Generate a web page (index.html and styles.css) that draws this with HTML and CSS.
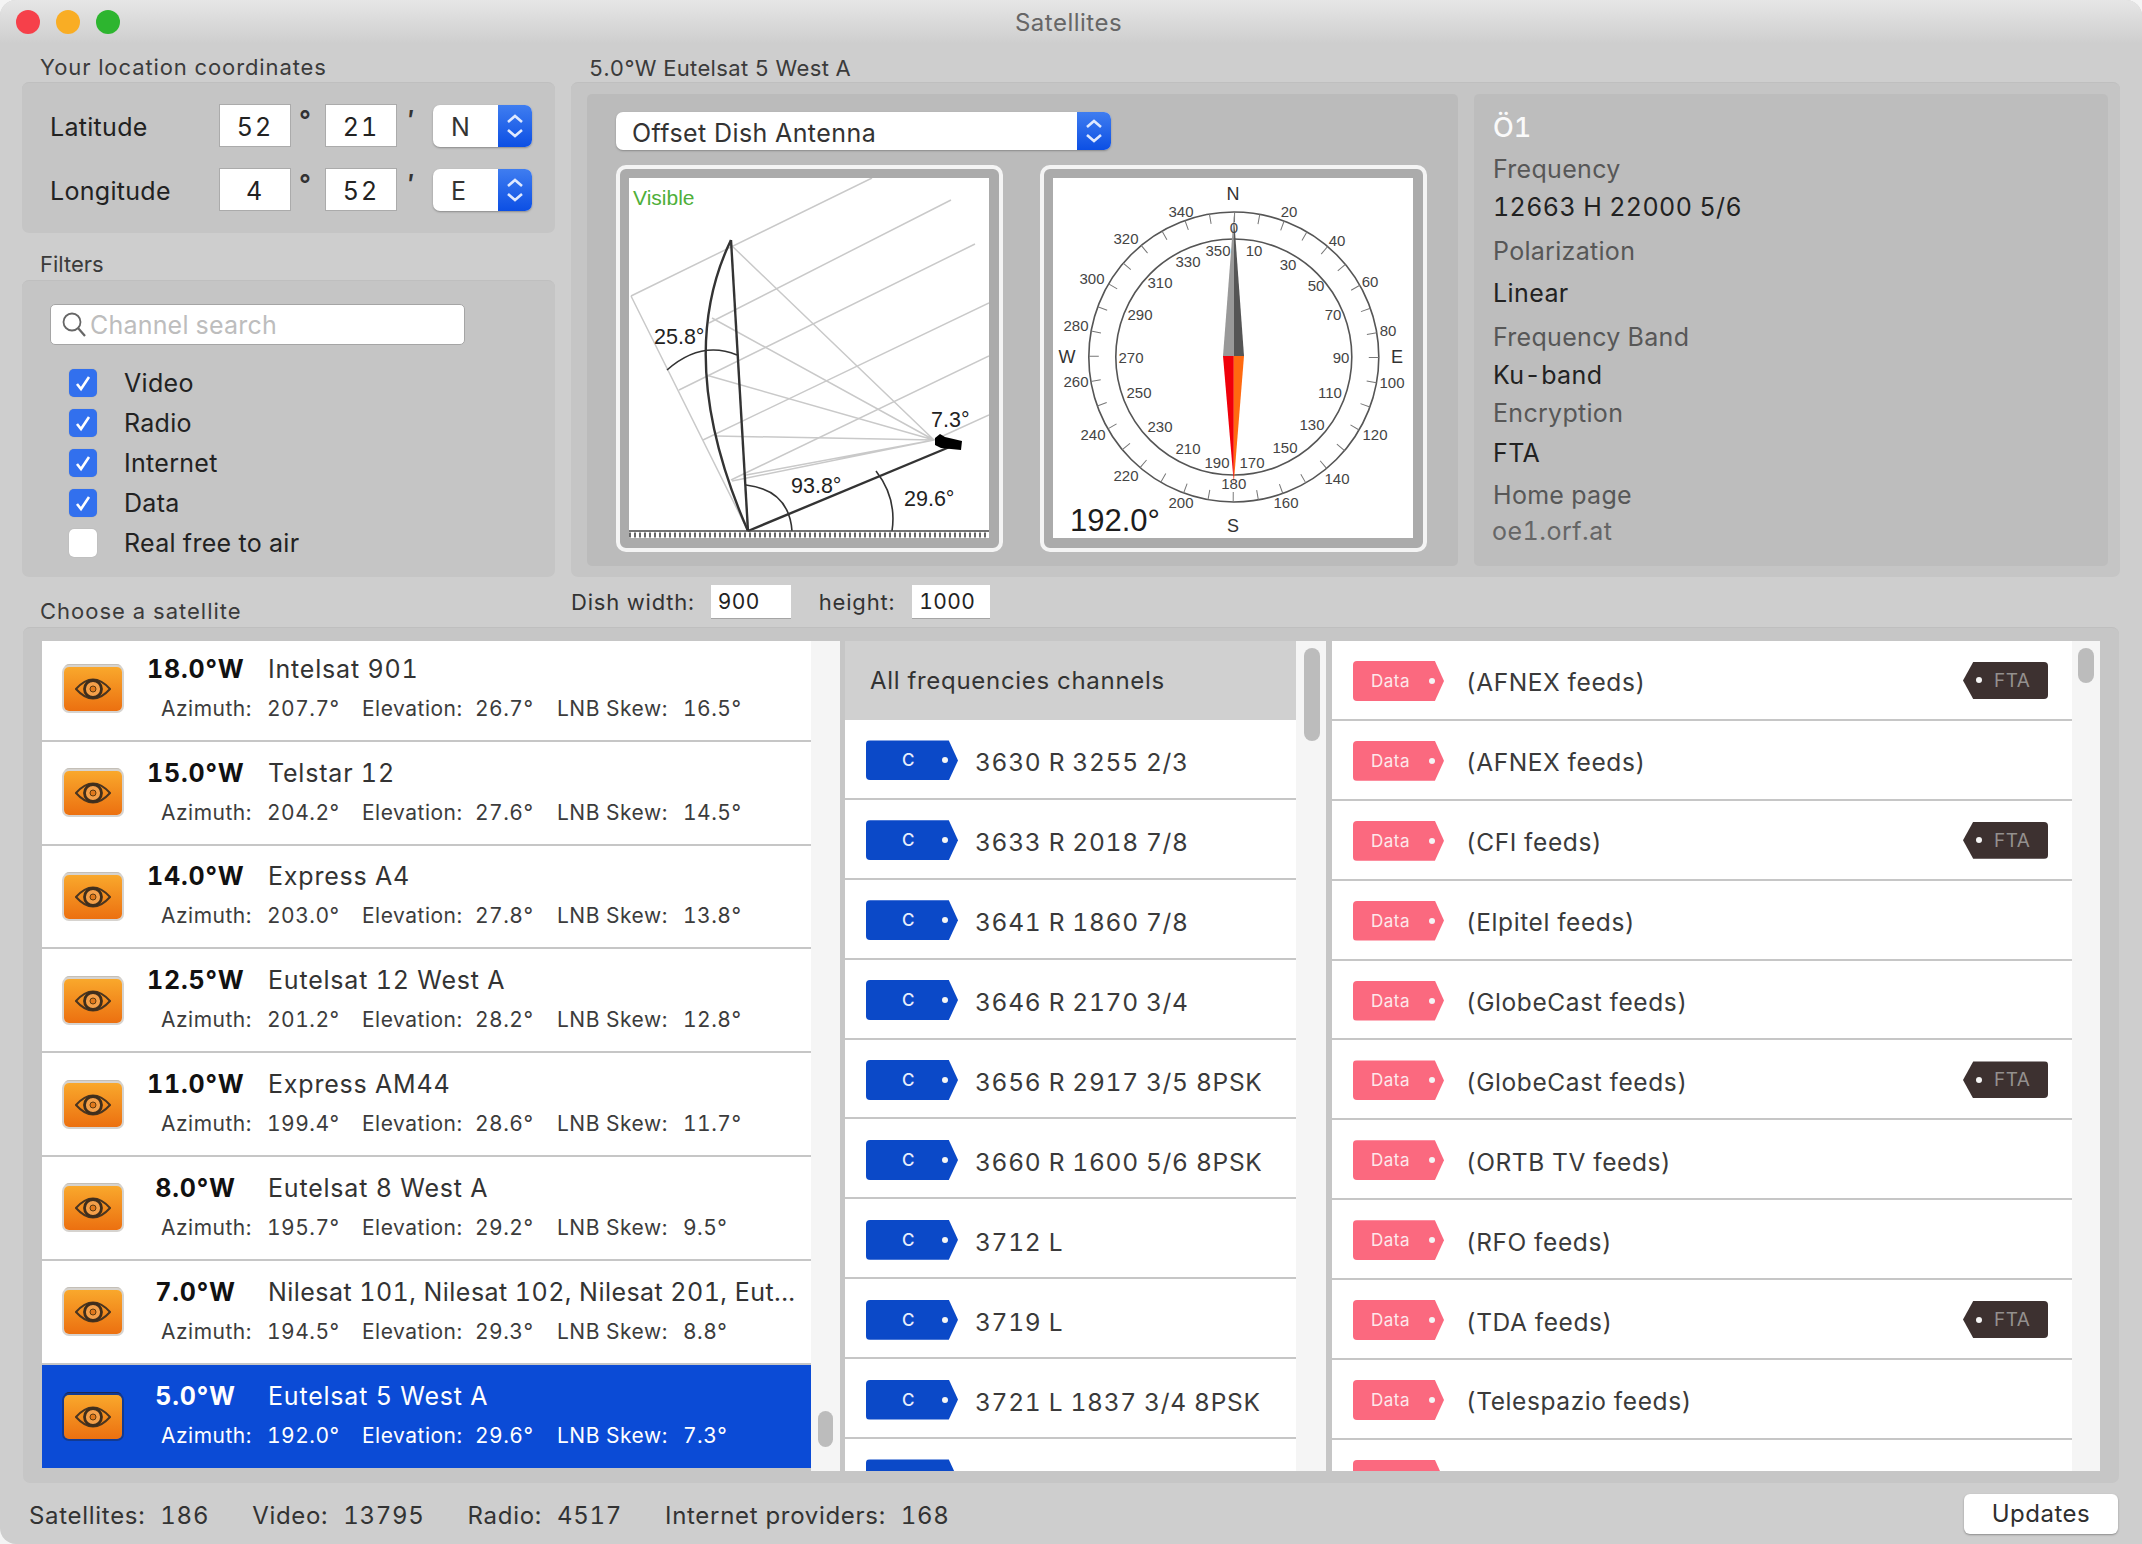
FILE: index.html
```html
<!DOCTYPE html>
<html lang="en">
<head>
<meta charset="utf-8">
<title>Satellites</title>
<link rel="stylesheet" href="styles.css">
</head>
<body>
<svg class="defs" width="0" height="0">
  <symbol id="eye" viewBox="0 0 36 26">
    <path d="M1 13Q18 -6 35 13Q18 32 1 13Z" fill="none" stroke="#4a3520" stroke-width="2"/>
    <circle cx="18" cy="13" r="8.5" fill="#f4a04a" stroke="#3f2e1c" stroke-width="2.8"/>
    <circle cx="18" cy="13" r="3" fill="#e0781c" stroke="#5c3a10" stroke-width="1"/>
  </symbol>
  <symbol id="updown" viewBox="0 0 22 30">
    <path d="M4 11l7-6 7 6M4 19l7 6 7-6" fill="none" stroke="#dfe9ff" stroke-width="2.6"/>
  </symbol>
  <symbol id="tick" viewBox="0 0 28 28">
    <path d="M8 15l4 5 8-12" fill="none" stroke="#fff" stroke-width="2.6"/>
  </symbol>
</svg>
<div class="window">
  <header class="titlebar">
    <div class="lights"><span class="light red"></span><span class="light yellow"></span><span class="light green"></span></div>
    <div class="title">Satellites</div>
  </header>

  <div class="top">
    <div class="left-col">
      <div class="cap cap-loc">Your location coordinates</div>
      <section class="group loc">
        <div class="coord">
          <span class="coord-label">Latitude</span>
          <span class="field">52</span><span class="unit">°</span>
          <span class="field">21</span><span class="unit">′</span>
          <div class="select small"><span class="select-text">N</span><span class="stepper"><svg width="22" height="30"><use href="#updown"/></svg></span></div>
        </div>
        <div class="coord">
          <span class="coord-label">Longitude</span>
          <span class="field">4</span><span class="unit">°</span>
          <span class="field">52</span><span class="unit">′</span>
          <div class="select small"><span class="select-text">E</span><span class="stepper"><svg width="22" height="30"><use href="#updown"/></svg></span></div>
        </div>
      </section>
      <div class="cap cap-fil">Filters</div>
      <section class="group filters">
        <div class="search">
          <svg width="26" height="28" viewBox="0 0 26 28"><circle cx="11" cy="11" r="8.5" fill="none" stroke="#666" stroke-width="1.8"/><path d="M17 17l7 8" stroke="#666" stroke-width="2.2"/></svg>
          <span class="placeholder">Channel search</span>
        </div>
        <div class="check"><span class="box on"><svg width="28" height="28"><use href="#tick"/></svg></span><span>Video</span></div>
        <div class="check"><span class="box on"><svg width="28" height="28"><use href="#tick"/></svg></span><span>Radio</span></div>
        <div class="check"><span class="box on"><svg width="28" height="28"><use href="#tick"/></svg></span><span>Internet</span></div>
        <div class="check"><span class="box on"><svg width="28" height="28"><use href="#tick"/></svg></span><span>Data</span></div>
        <div class="check"><span class="box"></span><span>Real free to air</span></div>
      </section>
    </div>

    <div class="right-col">
      <div class="cap cap-sat">5.0°W Eutelsat 5 West A</div>
      <section class="group sat-detail">
        <div class="dish-panel">
          <div class="select wide"><span class="select-text">Offset Dish Antenna</span><span class="stepper"><svg width="22" height="30"><use href="#updown"/></svg></span></div>
          <div class="frames">
            <div class="frame">
              <svg class="plot" width="360" height="360" viewBox="0 0 360 360">
                <rect width="360" height="360" fill="#fff"/>
                <g stroke="#c9c9c9" stroke-width="1.5" fill="none">
                  <path d="M2 118L243 0M80 145L322 22M50 212L346 66M74 262L360 125M102 302L360 178M305 262L360 237M2 118L119 353"/>
                  <path d="M102 67L305 262M83 140L305 262M77 197L305 262M87 258L305 262M117 297L305 262M103 303L305 262"/>
                </g>
                <g fill="none" stroke="#333">
                  <path d="M102 62L119 353" stroke-width="2.4"/>
                  <path d="M102 62Q44 182 119 353" stroke-width="2.4"/>
                  <path d="M119 353L323 268" stroke-width="2.4"/>
                  <path d="M38 192Q72 162 108 177" stroke-width="1.6"/>
                  <path d="M117 307Q160 312 163 353" stroke-width="1.6"/>
                  <path d="M247 293Q268 320 263 353" stroke-width="1.6"/>
                </g>
                <path d="M306 260L311 256L316 259L333 263L332 272L312 270L306 267Z" fill="#000"/>
                <path d="M0 353H360" stroke="#444" stroke-width="1.4"/>
                <path d="M0 357H360" stroke="#666" stroke-width="5" stroke-dasharray="2 3"/>
                <text class="svg-visible" x="4" y="27">Visible</text>
                <text class="svg-angle" x="25" y="166">25.8°</text>
                <text class="svg-angle" x="162" y="315">93.8°</text>
                <text class="svg-angle" x="275" y="328">29.6°</text>
                <text class="svg-angle" x="302" y="249">7.3°</text>
              </svg>
            </div>
            <div class="frame">
              <svg class="plot" width="360" height="360" viewBox="0 0 360 360">
                <rect width="360" height="360" fill="#fff"/>
                <g fill="none" stroke="#555">
                  <circle cx="180.8" cy="179" r="145" stroke-width="1.6"/>
                  <circle cx="180.8" cy="179" r="118" stroke-width="1.6"/>
                  <circle cx="180.8" cy="179" r="140" stroke-width="10" stroke-dasharray="1 23.435" stroke="#777"/>
                </g>
                <path d="M180.8 37L170 178H180.8Z" fill="#999"/>
                <path d="M180.8 37L191 178H180.8Z" fill="#555"/>
                <path d="M180.8 305L170 178H180.8Z" fill="#f0000a"/>
                <path d="M180.8 305L191 178H180.8Z" fill="#ff6a10"/>
                <g class="svg-num">
                  <text x="236" y="39">20</text><text x="284" y="68">40</text><text x="317" y="109">60</text><text x="335" y="158">80</text>
                  <text x="339" y="210">100</text><text x="322" y="262">120</text><text x="284" y="306">140</text><text x="233" y="330">160</text>
                  <text x="128" y="330">200</text><text x="73" y="303">220</text><text x="40" y="262">240</text><text x="23" y="209">260</text>
                  <text x="23" y="153">280</text><text x="39" y="106">300</text><text x="73" y="66">320</text><text x="128" y="39">340</text>
                  <text x="201" y="78">10</text><text x="235" y="92">30</text><text x="263" y="113">50</text><text x="280" y="142">70</text>
                  <text x="288" y="185">90</text><text x="277" y="220">110</text><text x="259" y="252">130</text><text x="232" y="275">150</text>
                  <text x="199" y="290">170</text><text x="164" y="290">190</text><text x="135" y="276">210</text><text x="107" y="254">230</text>
                  <text x="86" y="220">250</text><text x="78" y="185">270</text><text x="87" y="142">290</text><text x="107" y="110">310</text>
                  <text x="135" y="89">330</text><text x="165" y="78">350</text>
                  <text x="180.8" y="55">0</text><text x="180.8" y="311">180</text>
                </g>
                <g class="svg-card">
                  <text x="180" y="22">N</text><text x="344" y="185">E</text><text x="180" y="354">S</text><text x="14" y="185">W</text>
                </g>
                <text class="svg-az" x="17" y="353">192.0°</text>
              </svg>
            </div>
          </div>
        </div>
        <div class="info">
          <div class="info-title">Ö1</div>
          <div class="info-label">Frequency</div>
          <div class="info-value">12663 H 22000 5/6</div>
          <div class="info-label">Polarization</div>
          <div class="info-value">Linear</div>
          <div class="info-label">Frequency Band</div>
          <div class="info-value">Ku-band</div>
          <div class="info-label">Encryption</div>
          <div class="info-value">FTA</div>
          <div class="info-label">Home page</div>
          <div class="info-link">oe1.orf.at</div>
        </div>
      </section>
    </div>
  </div>

  <div class="mid">
    <div class="cap cap-choose">Choose a satellite</div>
    <div class="dish-size">
      <span>Dish width:</span><span class="mini w">900</span>
      <span class="h-label">height:</span><span class="mini h">1000</span>
    </div>
  </div>

  <section class="group lists">
    <div class="list sats">
      <div class="sat-rows">
        <div class="sat"><div class="eye"><svg width="36" height="26"><use href="#eye"/></svg></div><div class="sat-text"><div class="sat-main"><b class="lon">18.0°W</b><span>Intelsat 901</span></div><div class="sat-sub"><span>Azimuth:</span><span>207.7°</span><span>Elevation:</span><span>26.7°</span><span>LNB Skew:</span><span>16.5°</span></div></div></div>
        <div class="sat"><div class="eye"><svg width="36" height="26"><use href="#eye"/></svg></div><div class="sat-text"><div class="sat-main"><b class="lon">15.0°W</b><span>Telstar 12</span></div><div class="sat-sub"><span>Azimuth:</span><span>204.2°</span><span>Elevation:</span><span>27.6°</span><span>LNB Skew:</span><span>14.5°</span></div></div></div>
        <div class="sat"><div class="eye"><svg width="36" height="26"><use href="#eye"/></svg></div><div class="sat-text"><div class="sat-main"><b class="lon">14.0°W</b><span>Express A4</span></div><div class="sat-sub"><span>Azimuth:</span><span>203.0°</span><span>Elevation:</span><span>27.8°</span><span>LNB Skew:</span><span>13.8°</span></div></div></div>
        <div class="sat"><div class="eye"><svg width="36" height="26"><use href="#eye"/></svg></div><div class="sat-text"><div class="sat-main"><b class="lon">12.5°W</b><span>Eutelsat 12 West A</span></div><div class="sat-sub"><span>Azimuth:</span><span>201.2°</span><span>Elevation:</span><span>28.2°</span><span>LNB Skew:</span><span>12.8°</span></div></div></div>
        <div class="sat"><div class="eye"><svg width="36" height="26"><use href="#eye"/></svg></div><div class="sat-text"><div class="sat-main"><b class="lon">11.0°W</b><span>Express AM44</span></div><div class="sat-sub"><span>Azimuth:</span><span>199.4°</span><span>Elevation:</span><span>28.6°</span><span>LNB Skew:</span><span>11.7°</span></div></div></div>
        <div class="sat"><div class="eye"><svg width="36" height="26"><use href="#eye"/></svg></div><div class="sat-text"><div class="sat-main"><b class="lon">8.0°W</b><span>Eutelsat 8 West A</span></div><div class="sat-sub"><span>Azimuth:</span><span>195.7°</span><span>Elevation:</span><span>29.2°</span><span>LNB Skew:</span><span>9.5°</span></div></div></div>
        <div class="sat"><div class="eye"><svg width="36" height="26"><use href="#eye"/></svg></div><div class="sat-text"><div class="sat-main"><b class="lon">7.0°W</b><span class="long-name">Nilesat 101, Nilesat 102, Nilesat 201, Eut...</span></div><div class="sat-sub"><span>Azimuth:</span><span>194.5°</span><span>Elevation:</span><span>29.3°</span><span>LNB Skew:</span><span>8.8°</span></div></div></div>
        <div class="sat selected"><div class="eye"><svg width="36" height="26"><use href="#eye"/></svg></div><div class="sat-text"><div class="sat-main"><b class="lon">5.0°W</b><span>Eutelsat 5 West A</span></div><div class="sat-sub"><span>Azimuth:</span><span>192.0°</span><span>Elevation:</span><span>29.6°</span><span>LNB Skew:</span><span>7.3°</span></div></div></div>
      </div>
      <div class="track track-sat"><div class="thumb"></div></div>
    </div>

    <div class="list freqs">
      <div class="rows">
        <div class="freq-head">All frequencies channels</div>
        <div class="row"><span class="tag tag-c"><span>C</span><i></i></span><span>3630 R 3255 2/3</span></div>
        <div class="row"><span class="tag tag-c"><span>C</span><i></i></span><span>3633 R 2018 7/8</span></div>
        <div class="row"><span class="tag tag-c"><span>C</span><i></i></span><span>3641 R 1860 7/8</span></div>
        <div class="row"><span class="tag tag-c"><span>C</span><i></i></span><span>3646 R 2170 3/4</span></div>
        <div class="row"><span class="tag tag-c"><span>C</span><i></i></span><span>3656 R 2917 3/5 8PSK</span></div>
        <div class="row"><span class="tag tag-c"><span>C</span><i></i></span><span>3660 R 1600 5/6 8PSK</span></div>
        <div class="row"><span class="tag tag-c"><span>C</span><i></i></span><span>3712 L</span></div>
        <div class="row"><span class="tag tag-c"><span>C</span><i></i></span><span>3719 L</span></div>
        <div class="row"><span class="tag tag-c"><span>C</span><i></i></span><span>3721 L 1837 3/4 8PSK</span></div>
        <div class="row"><span class="tag tag-c"></span></div>
      </div>
      <div class="track track-freq"><div class="thumb"></div></div>
    </div>

    <div class="list chans">
      <div class="rows">
        <div class="row"><span class="tag tag-d"><span>Data</span><i></i></span><span class="chan">(AFNEX feeds)</span><span class="tag tag-f"><i></i><span>FTA</span></span></div>
        <div class="row"><span class="tag tag-d"><span>Data</span><i></i></span><span class="chan">(AFNEX feeds)</span></div>
        <div class="row"><span class="tag tag-d"><span>Data</span><i></i></span><span class="chan">(CFI feeds)</span><span class="tag tag-f"><i></i><span>FTA</span></span></div>
        <div class="row"><span class="tag tag-d"><span>Data</span><i></i></span><span class="chan">(Elpitel feeds)</span></div>
        <div class="row"><span class="tag tag-d"><span>Data</span><i></i></span><span class="chan">(GlobeCast feeds)</span></div>
        <div class="row"><span class="tag tag-d"><span>Data</span><i></i></span><span class="chan">(GlobeCast feeds)</span><span class="tag tag-f"><i></i><span>FTA</span></span></div>
        <div class="row"><span class="tag tag-d"><span>Data</span><i></i></span><span class="chan">(ORTB TV feeds)</span></div>
        <div class="row"><span class="tag tag-d"><span>Data</span><i></i></span><span class="chan">(RFO feeds)</span></div>
        <div class="row"><span class="tag tag-d"><span>Data</span><i></i></span><span class="chan">(TDA feeds)</span><span class="tag tag-f"><i></i><span>FTA</span></span></div>
        <div class="row"><span class="tag tag-d"><span>Data</span><i></i></span><span class="chan">(Telespazio feeds)</span></div>
        <div class="row"><span class="tag tag-d"></span></div>
      </div>
      <div class="track track-chan"><div class="thumb"></div></div>
    </div>
  </section>

  <footer class="status">
    <span class="stat"><span>Satellites:</span><span>186</span></span>
    <span class="stat"><span>Video:</span><span>13795</span></span>
    <span class="stat"><span>Radio:</span><span>4517</span></span>
    <span class="stat"><span>Internet providers:</span><span>168</span></span>
    <button class="updates">Updates</button>
  </footer>
</div>
</body>
</html>
```

FILE: styles.css
```css
* { box-sizing: border-box; }
html, body { margin: 0; padding: 0; }
body {
  width: 2142px;
  height: 1544px;
  background: #f4f4f4;
  font-family: Inter, "Liberation Sans", sans-serif;
  font-size: 24px;
  font-variant-numeric: tabular-nums;
  color: #2a2a2a;
  overflow: hidden;
}
.defs { position: absolute; }
.window {
  width: 2142px;
  height: 1544px;
  background: #cecece;
  border-radius: 16px 16px 0 16px;
  display: flex;
  flex-direction: column;
  overflow: hidden;
}

/* title bar */
.titlebar {
  height: 44px;
  flex: none;
  display: flex;
  align-items: center;
  justify-content: center;
  background: linear-gradient(#e6e6e6, #cecece);
  position: relative;
}
.lights {
  position: absolute;
  left: 16px;
  top: 10px;
  display: flex;
  gap: 16px;
}
.light { width: 24px; height: 24px; border-radius: 50%; }
.red { background: #f6404a; }
.yellow { background: #f9ad24; }
.green { background: #2db52f; }
.title { font-size: 24px; letter-spacing: .5px; color: #666; line-height: 44px; margin: 1px 5px 0 0; }

/* shared */
.cap { font-size: 22px; color: #3b3b3b; line-height: 28px; padding-left: 18px; }
.group {
  background: #c5c5c5;
  border-radius: 7px;
  border-top: 1px solid #bfbfbf;
}

/* top section */
.top { display: flex; gap: 16px; padding: 0 22px; flex: none; }
.left-col { width: 533px; flex: none; }
.right-col { flex: 1; }
.cap-loc { height: 38px; padding-top: 9px; letter-spacing: .9px; }
.cap-sat { height: 38px; padding-top: 10px; letter-spacing: .35px; }
.cap-fil { height: 47px; padding-top: 17px; }
.loc { height: 151px; padding: 21px 0 0 28px; }
.coord { display: flex; align-items: center; height: 43px; margin-bottom: 21px; }
.coord-label { width: 169px; font-size: 25px; letter-spacing: .3px; color: #222; padding-top: 2px; }
.field {
  width: 72px;
  height: 43px;
  background: #fff;
  border: 1px solid #ababab;
  text-align: center;
  line-height: 45px;
  font-size: 25px;
  letter-spacing: 2px;
  color: #222;
}
.unit { width: 34px; text-align: center; font-size: 26px; font-weight: 600; line-height: 26px; align-self: flex-start; color: #333; padding: 3px 6px 0 0; }
.select {
  display: flex;
  background: #fff;
  border-radius: 7px;
  box-shadow: 0 1px 2px #8a8a8a;
  overflow: hidden;
  font-size: 25px;
}
.select.small { width: 99px; height: 42px; margin-left: 2px; }
.select.wide { width: 495px; height: 38px; }
.select-text { flex: 1; line-height: 44px; padding-left: 18px; color: #333; }
.select.wide .select-text { line-height: 42px; padding-left: 16px; letter-spacing: .45px; }
.stepper {
  width: 34px;
  flex: none;
  background: linear-gradient(#3f7df0, #0c4fe4);
  display: flex;
  align-items: center;
  justify-content: center;
}

.filters { height: 297px; padding: 23px 0 0 28px; }
.search {
  width: 415px;
  height: 41px;
  background: #fff;
  border: 1px solid #a5a5a5;
  border-radius: 5px;
  display: flex;
  align-items: center;
  gap: 3px;
  padding-left: 10px;
}
.placeholder { color: #bdbdbd; font-size: 25px; letter-spacing: .2px; }
.check {
  display: flex;
  align-items: center;
  height: 40px;
  margin-left: 19px;
  font-size: 25px;
  letter-spacing: .3px;
  color: #222;
}
.search + .check { margin-top: 18px; }
.box {
  width: 28px;
  height: 28px;
  border-radius: 5px;
  background: #fff;
  margin-right: 27px;
  flex: none;
  box-shadow: 0 0 1px #999;
}
.box.on { background: #3270ee; }
.box svg { display: block; }

.sat-detail {
  height: 495px;
  display: flex;
  gap: 16px;
  padding: 11px 12px 0 16px;
}
.dish-panel {
  width: 871px;
  height: 472px;
  background: #bbb;
  border-radius: 5px;
  padding: 18px 0 0 29px;
}
.frames { display: flex; gap: 37px; margin-top: 15px; }
.frame {
  width: 387px;
  height: 387px;
  border: 4px solid #f4f4f4;
  border-radius: 10px;
  background: #ababab;
  padding: 9px;
}
.plot { display: block; }
.svg-visible { font: 21px "Liberation Sans", sans-serif; fill: #4eaf3a; }
.svg-angle { font: 21.5px "Liberation Sans", sans-serif; fill: #222; }
.svg-num text { font: 15px "Liberation Sans", sans-serif; fill: #444; text-anchor: middle; }
.svg-card text { font: 18px "Liberation Sans", sans-serif; fill: #333; text-anchor: middle; }
.svg-az { font: 31px "Liberation Sans", sans-serif; fill: #1c1c1c; }

.info {
  flex: 1;
  height: 472px;
  background: #bdbdbd;
  border-radius: 5px;
  padding: 19px 0 0 19px;
}
.info > div { line-height: 30px; }
.info-title { font-size: 27px; font-weight: 500; color: #fafafa; }
.info-label { font-size: 25px; letter-spacing: .3px; color: #575757; }
.info-value { font-size: 25px; letter-spacing: .4px; color: #222; }
.info-link { font-size: 25px; letter-spacing: .5px; color: #666; margin-left: -1px; }
.info > :nth-child(2) { margin-top: 11px; }
.info > :nth-child(3) { margin-top: 8px; }
.info > :nth-child(4) { margin-top: 14px; }
.info > :nth-child(5) { margin-top: 12px; }
.info > :nth-child(6) { margin-top: 14px; }
.info > :nth-child(7) { margin-top: 8px; }
.info > :nth-child(8) { margin-top: 8px; }
.info > :nth-child(9) { margin-top: 10px; }
.info > :nth-child(10) { margin-top: 12px; }
.info > :nth-child(11) { margin-top: 6px; }

/* between rows */
.mid { display: flex; height: 50px; padding: 0 22px; flex: none; }
.cap-choose { width: 549px; padding-top: 20px; flex: none; letter-spacing: 1px; }
.dish-size {
  display: flex;
  align-items: center;
  height: 34px;
  margin-top: 8px;
  font-size: 22px;
  letter-spacing: .8px;
  color: #333;
}
.mini {
  height: 34px;
  background: #fff;
  border-bottom: 1px solid #a5a5a5;
  line-height: 34px;
  font-size: 21px;
  padding-left: 7px;
  letter-spacing: .4px;
  color: #222;
}
.mini.w { width: 80px; margin-left: 16px; }
.mini.h { width: 78px; margin-left: 17px; }
.h-label { margin-left: 28px; }

/* lists */
.lists {
  height: 856px;
  margin: 0 23px 0 23px;
  padding: 13px 19px 13px 19px;
  display: flex;
  gap: 5px;
  flex: none;
  background: #c6c6c6;
}
.list { display: flex; height: 830px; overflow: hidden; flex: none; }
.sats { width: 798px; }
.freqs { width: 481px; }
.chans { width: 768px; margin-left: 1px; }
.track { background: #f5f5f5; flex: none; height: 830px; }
.thumb { background: #bcbcbc; border-radius: 9px; }
.track-sat { width: 29px; padding: 770px 0 0 7px; }
.track-sat .thumb { width: 15px; height: 36px; }
.track-freq { width: 30px; padding: 7px 0 0 8px; }
.track-freq .thumb { width: 16px; height: 93px; }
.track-chan { width: 28px; padding: 7px 0 0 6px; }
.track-chan .thumb { width: 16px; height: 35px; }

.sat-rows { width: 769px; flex: none; margin-top: -3px; }
.sat {
  height: 103.8px;
  background: #fff;
  border-bottom: 2px solid #c6c6c6;
  display: flex;
  align-items: center;
  padding-left: 22px;
}
.eye {
  width: 58px;
  height: 44px;
  flex: none;
  margin-top: 1px;
  background: linear-gradient(#f9a82c, #ec7010);
  border-radius: 5px;
  box-shadow: 0 0 0 2px #d6d3cf, 0 -3px 0 #c4bfb7;
  display: flex;
  align-items: center;
  justify-content: center;
}
.sat-text { margin-left: 25px; width: 650px; }
.sat-main { display: flex; line-height: 30px; font-size: 25px; letter-spacing: .8px; color: #333; white-space: nowrap; margin-top: -1px; }
.lon { width: 97px; text-align: center; margin-right: 24px; font-weight: 700; letter-spacing: .8px; color: #111; white-space: nowrap; }
.long-name { letter-spacing: .45px; }
.sat-sub {
  display: grid;
  grid-template-columns: 106px 95px 113px 82px 126px auto;
  margin-left: 14px;
  margin-top: 11px;
  line-height: 28px;
  font-size: 21px;
  letter-spacing: .5px;
  color: #3c3c3c;
  white-space: nowrap;
}
.sat.selected { background: #0b4bd6; border-bottom: 0; }
.sat.selected .sat-main, .sat.selected .lon, .sat.selected .sat-sub { color: #fff; }
.sat.selected .eye { box-shadow: 0 0 0 2px #123a92, 0 -3px 0 #1c2a55; }

.rows { flex: 1; min-width: 0; }
.freq-head {
  height: 79px;
  background: #d0d0d0;
  line-height: 80px;
  padding-left: 25px;
  font-size: 24px;
  letter-spacing: .7px;
  color: #333;
}
.row {
  height: 79.9px;
  background: #fff;
  border-bottom: 2px solid #c6c6c6;
  display: flex;
  align-items: center;
  padding: 5px 23px 0 21px;
  font-size: 24.5px;
  letter-spacing: .6px;
  color: #3a3a3a;
  white-space: nowrap;
}
.freqs .row { letter-spacing: .7px; padding-top: 7px; }
.tag {
  height: 40px;
  flex: none;
  display: flex;
  align-items: center;
  border-radius: 4px;
  font-size: 17px;
  letter-spacing: .5px;
}
.tag i { width: 6px; height: 6px; border-radius: 50%; background: #f5f5f5; flex: none; }
.tag-c {
  width: 92px;
  margin-right: 17px;
  background: #0b49c8;
  color: #e8eefc;
  font-weight: 500;
  clip-path: polygon(0 0, 90% 0, 100% 50%, 90% 100%, 0 100%);
  padding-left: 36px;
  gap: 27px;
  margin-top: -4px;
}
.tag-d {
  width: 91px;
  margin-right: 22px;
  background: #fb697f;
  color: #fde8eb;
  clip-path: polygon(0 0, 90% 0, 100% 50%, 90% 100%, 0 100%);
  padding-left: 18px;
  gap: 19px;
  margin-top: -3px;
}
.tag-f {
  width: 85px;
  height: 37px;
  margin-left: auto;
  background: #3d3130;
  color: #94908e;
  clip-path: polygon(0 50%, 12% 0, 100% 0, 100% 100%, 12% 100%);
  padding-left: 13px;
  gap: 12px;
  font-size: 19px;
  margin-top: -4px;
  margin-right: 1px;
}
.chan { flex: none; }

/* status */
.status {
  flex: 1;
  display: flex;
  align-items: center;
  padding: 0 24px 0 29px;
  font-size: 24px;
  letter-spacing: .7px;
  color: #333;
}
.stat { display: flex; gap: 15px; margin-right: 43px; margin-top: 3px; }
.updates {
  margin-left: auto;
  width: 154px;
  height: 40px;
  background: #fff;
  border: 0;
  border-radius: 6px;
  box-shadow: 0 1px 2px #8c8c8c;
  font: 24px Inter, "Liberation Sans", sans-serif;
  letter-spacing: .5px;
  color: #2e2e2e;
  padding: 0;
}
```
